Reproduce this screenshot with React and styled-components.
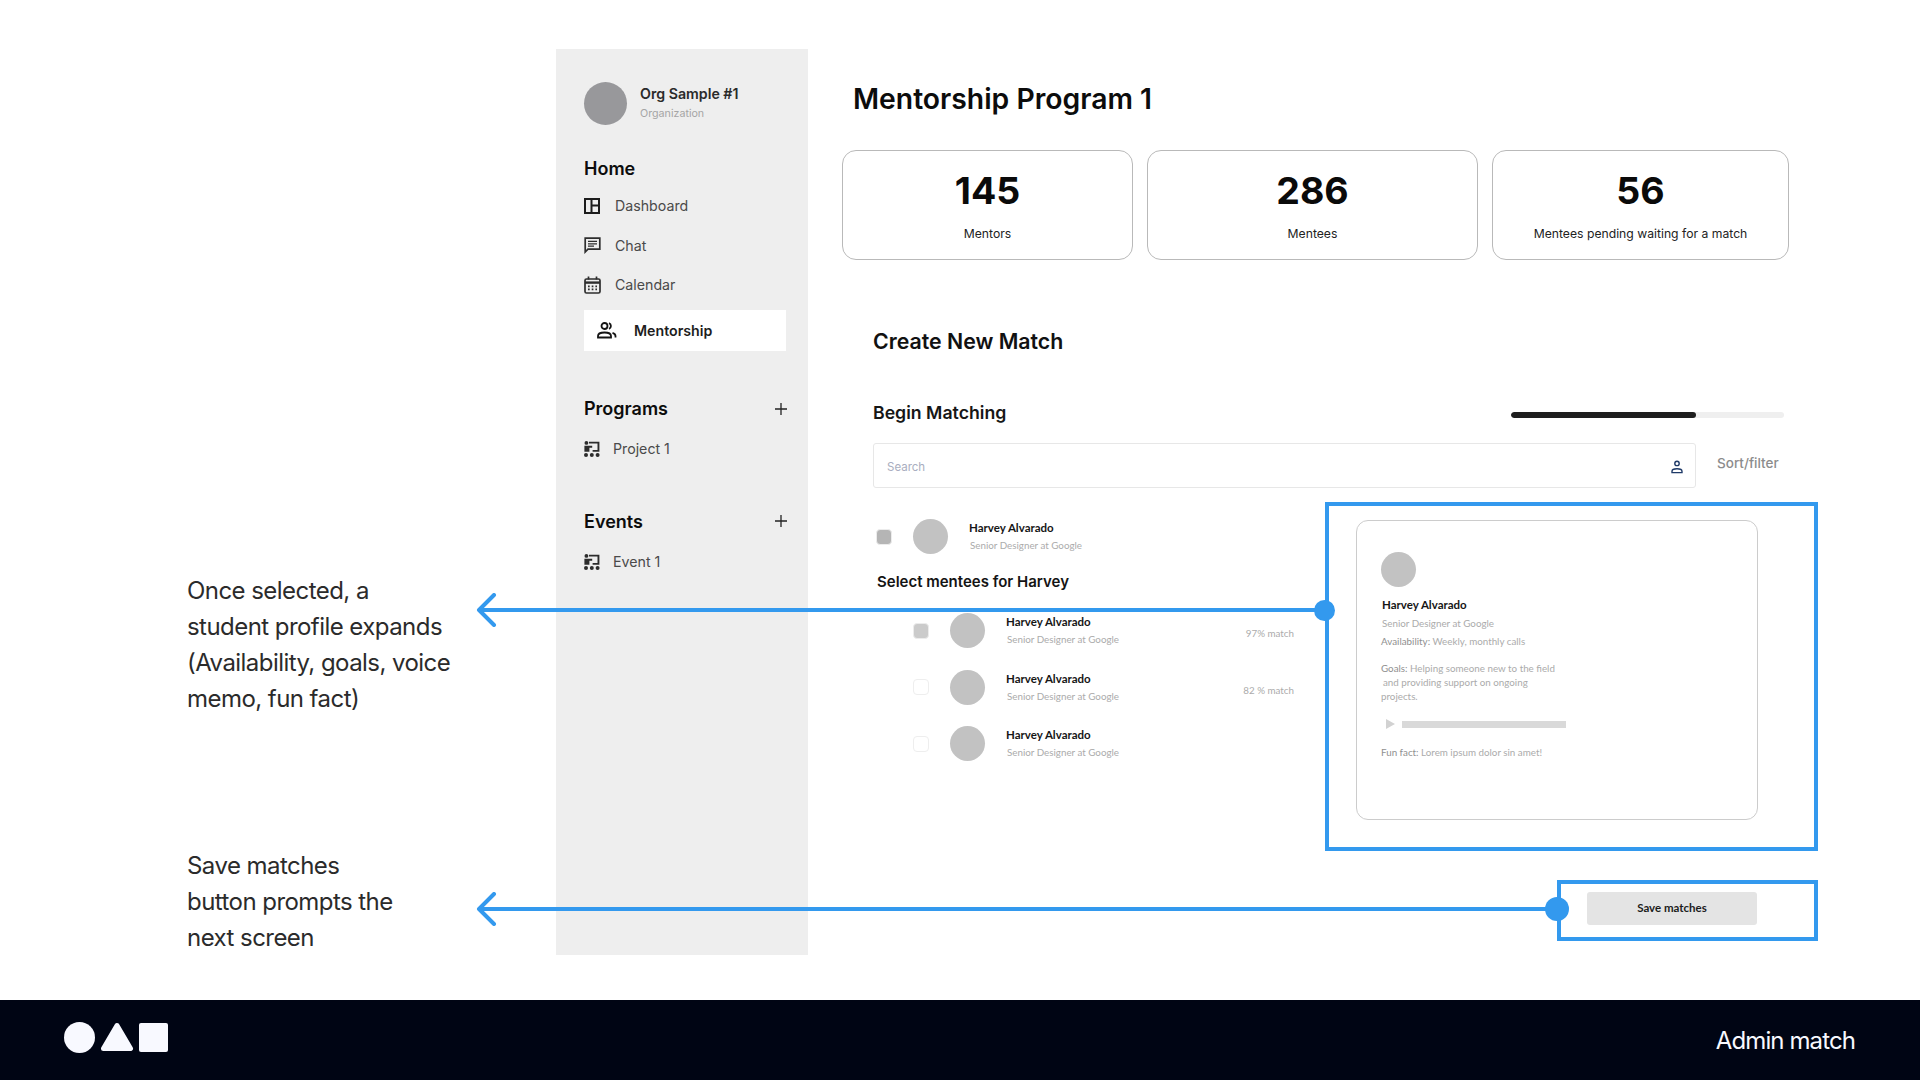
import React from 'react';
import styled, { createGlobalStyle } from 'styled-components';

const GlobalStyle = createGlobalStyle`
  html, body {
    margin: 0;
    padding: 0;
    background: #fff;
  }
  body {
    font-family: 'Inter', 'Liberation Sans', sans-serif;
    color: #111;
  }
  * {
    box-sizing: border-box;
  }
`;

const BLUE = '#3399ee';

const Page = styled.div`
  width: 1920px;
  height: 1080px;
  display: flex;
  flex-direction: column;
  overflow: hidden;
`;

const Main = styled.div`
  flex: 1;
  display: flex;
  padding-top: 49px;
`;

const Notes = styled.div`
  width: 556px;
  padding: 524px 0 0 187px;
  display: flex;
  flex-direction: column;
  gap: 131px;
`;

const Note = styled.p`
  margin: 0;
  font-size: 24px;
  line-height: 36px;
  letter-spacing: -0.55px;
  color: #2b2b2b;
  white-space: pre-line;
`;

const Sidebar = styled.aside`
  width: 252px;
  height: 906px;
  background: #eeeeee;
  padding: 33px 21px 0 28px;
`;

const OrgRow = styled.div`
  display: flex;
  align-items: center;
  gap: 13px;
  margin-bottom: 31px;
`;

const OrgAvatar = styled.div`
  width: 43px;
  height: 43px;
  border-radius: 50%;
  background: #98989b;
`;

const OrgName = styled.div`
  font-size: 14.2px;
  font-weight: 600;
  line-height: 18px;
  color: #2a2a2a;
`;

const OrgType = styled.div`
  font-size: 10.7px;
  line-height: 16px;
  margin-top: 3px;
  color: #a5a5a5;
`;

const SectionHead = styled.div`
  display: flex;
  align-items: center;
  justify-content: space-between;
  height: 24px;
  font-size: 18px;
  font-weight: 600;
  color: #0c0c0c;
  margin-top: ${p => p.$top || 0}px;
  margin-bottom: ${p => p.$bottom || 0}px;
`;

const NavItem = styled.div`
  display: flex;
  align-items: center;
  height: 39.5px;
  gap: ${p => p.$gap || 14}px;
  font-size: 14.2px;
  color: #4a4a4a;
`;

const ActiveItem = styled.div`
  display: flex;
  align-items: center;
  gap: 17px;
  width: 202px;
  height: 41px;
  margin-top: 5px;
  padding-left: 13px;
  background: #fff;
  font-size: 14.2px;
  font-weight: 600;
  color: #1d1d1d;
`;

const Content = styled.main`
  flex: 1;
  padding-left: 34px;
`;

const Title = styled.h1`
  margin: 33px 0 0 11px;
  font-size: 28.3px;
  line-height: 34px;
  font-weight: 600;
  color: #0c0c0c;
`;

const StatRow = styled.div`
  display: flex;
  gap: 14px;
  margin-top: 34px;
`;

const StatCard = styled.div`
  width: ${p => p.$width}px;
  height: 110px;
  border: 1px solid #b9b9b9;
  border-radius: 14px;
  text-align: center;
  padding-top: 17px;
`;

const StatValue = styled.div`
  font-size: 37.5px;
  line-height: 46px;
  font-weight: 700;
  color: #0a0a0a;
`;

const StatLabel = styled.div`
  margin-top: 12px;
  font-size: 12.2px;
  line-height: 16px;
  color: #222;
`;

const Form = styled.section`
  padding-left: 31px;
`;

const SubTitle = styled.h2`
  margin: 67px 0 0;
  font-size: 21.3px;
  line-height: 28px;
  font-weight: 600;
  color: #111;
`;

const MatchHead = styled.div`
  display: flex;
  align-items: center;
  justify-content: space-between;
  width: 911px;
  margin-top: 45px;
  height: 26px;
`;

const MatchTitle = styled.h3`
  margin: 0 0 2px;
  font-size: 17.7px;
  font-weight: 600;
  color: #161616;
`;

const Progress = styled.div`
  width: 273px;
  height: 6px;
  margin-top: 3px;
  border-radius: 3px;
  background: #efefef;
  overflow: hidden;
`;

const ProgressFill = styled.div`
  height: 100%;
  border-radius: 3px;
  background: #1e1e1e;
`;

const SearchRow = styled.div`
  display: flex;
  align-items: flex-start;
  gap: 21px;
  margin-top: 17px;
`;

const SearchBox = styled.div`
  width: 823px;
  height: 45px;
  display: flex;
  align-items: center;
  justify-content: space-between;
  padding: 2px 12px 0 13px;
  border: 1px solid #e7e7e7;
  border-radius: 3px;
  font-size: 11.5px;
  color: #a9aec0;
`;

const SortLabel = styled.div`
  margin-top: 11px;
  font-size: 13.5px;
  line-height: 18px;
  font-weight: 500;
  color: #8c8c8c;
`;

const MatchArea = styled.div`
  display: flex;
  margin-top: 14px;
`;

const PeopleList = styled.div`
  width: 452px;
  padding-top: 17px;
`;

const PersonRow = styled.div`
  display: flex;
  align-items: center;
  height: 35px;
  padding-left: ${p => (p.$nested ? 40 : 3)}px;
  padding-right: 31px;
  margin-bottom: ${p => p.$bottom || 0}px;
`;

const Check = styled.div`
  width: 16px;
  height: 16px;
  border-radius: 4px;
  border: 1px solid ${p => (p.$fill ? '#ececec' : '#eeeeee')};
  background: ${p => p.$fill || '#fff'};
  margin-right: 21px;
`;

const Avatar = styled.div`
  flex: none;
  width: 35px;
  height: 35px;
  border-radius: 50%;
  background: #c2c2c2;
`;

const PersonText = styled.div`
  margin-left: 21px;
  flex: 1;
`;

const PersonName = styled.div`
  font-family: 'Lato', 'Liberation Sans', sans-serif;
  font-size: 11.5px;
  line-height: 16px;
  font-weight: 700;
  color: #161616;
`;

const PersonRole = styled.div`
  font-family: 'Lato', 'Liberation Sans', sans-serif;
  font-size: 9.8px;
  line-height: 16px;
  margin: 1px 0 0 1px;
  color: #ababab;
`;

const MatchScore = styled.div`
  font-family: 'Lato', 'Liberation Sans', sans-serif;
  font-size: 9.8px;
  color: #ababab;
  margin-top: ${p => p.$top || 0}px;
`;

const SelectTitle = styled.div`
  margin: 0 0 21px 4px;
  font-size: 15px;
  line-height: 20px;
  font-weight: 600;
  color: #141414;
`;

const Frame = styled.div`
  position: relative;
  border: 4px solid ${BLUE};
`;

const ProfileFrame = styled(Frame)`
  width: 493px;
  height: 349px;
  padding: 14px 0 0 27px;
`;

const SaveFrame = styled(Frame)`
  width: 261px;
  height: 61px;
  padding: 8px 0 0 26px;
`;

const Dot = styled.span`
  position: absolute;
  left: ${p => p.$left}px;
  top: ${p => p.$top}px;
  width: ${p => p.$size}px;
  height: ${p => p.$size}px;
  border-radius: 50%;
  background: ${BLUE};
`;

const Connector = styled.div`
  position: absolute;
  right: 100%;
  top: ${p => p.$top}px;
  width: ${p => p.$width}px;
  height: 4px;
  background: ${BLUE};
`;

const ArrowHead = styled.svg`
  position: absolute;
  left: -2px;
  top: -15px;
`;

const ProfileCard = styled.div`
  width: 402px;
  height: 300px;
  border: 1px solid #cccccc;
  border-radius: 12px;
  padding: 31px 0 0 24px;
`;

const ProfileText = styled.div`
  font-family: 'Lato', 'Liberation Sans', sans-serif;
  font-size: 9.8px;
  line-height: 14px;
  color: #ababab;
  margin-top: ${p => p.$top || 0}px;
  margin-left: ${p => p.$left || 0}px;
  white-space: pre;
`;

const FieldLabel = styled.span`
  color: #8f8f8f;
`;

const ProfileName = styled(PersonName)`
  margin: 10px 0 0 1px;
`;

const Voice = styled.div`
  display: flex;
  align-items: center;
  gap: 7px;
  margin: 14px 0 0 5px;
  height: 14px;
`;

const PlayIcon = styled.span`
  width: 0;
  height: 0;
  border-left: 9px solid #d2d2d2;
  border-top: 5px solid transparent;
  border-bottom: 5px solid transparent;
`;

const VoiceBar = styled.div`
  width: 164px;
  height: 7px;
  background: #d9d9d9;
`;

const SaveRow = styled.div`
  display: flex;
  justify-content: flex-end;
  width: 945px;
  margin-top: 29px;
`;

const SaveButton = styled.button`
  width: 170px;
  height: 33px;
  padding: 0 0 2px;
  border: none;
  border-radius: 3px;
  background: #e4e4e4;
  font-family: 'Lato', 'Liberation Sans', sans-serif;
  font-size: 11.5px;
  font-weight: 700;
  color: #1c1c1c;
`;

const Footer = styled.footer`
  height: 80px;
  flex: none;
  background: #000514;
  display: flex;
  align-items: center;
  justify-content: space-between;
  padding: 0 65px 0 64px;
`;

const FooterTitle = styled.div`
  font-size: 24px;
  letter-spacing: -0.9px;
  color: #f8f9ff;
`;

const LogoSvg = styled.svg`
  margin-bottom: 5px;
`;

const DashboardIcon = () => (
  <svg width="16" height="16" viewBox="0 0 16 16" fill="none" stroke="#1c1c1c" strokeWidth="2">
    <rect x="1" y="1" width="14" height="14" />
    <path d="M7.5 1v14M7.5 7.5h7.5" />
  </svg>
);

const ChatIcon = () => (
  <svg width="17" height="17" viewBox="0 0 17 17" fill="none">
    <path d="M1.2 1.2h14.6v11H4L1.2 15z" stroke="#2e2e2e" strokeWidth="1.7" />
    <path d="M4 4.4h9M4 6.8h9M4 9.2h6" stroke="#2e2e2e" strokeWidth="1.3" />
  </svg>
);

const CalendarIcon = () => (
  <svg width="17" height="18" viewBox="0 0 17 18" fill="none" stroke="#2e2e2e">
    <rect x="1" y="3" width="15" height="14" rx="1.5" strokeWidth="1.7" />
    <path d="M1 6.6h15" strokeWidth="2.4" />
    <path d="M4.5 .4v3M12.5 .4v3" strokeWidth="1.7" />
    <path d="M4 10.4h9M4 13.4h9" strokeWidth="1.7" strokeDasharray="1.7 2" />
  </svg>
);

const PeopleIcon = () => (
  <svg width="20" height="17" viewBox="0 0 20 17" fill="none" stroke="#141414" strokeWidth="1.8">
    <circle cx="7.5" cy="4" r="3" />
    <path d="M1 15.5v-1.6c0-2 2.6-3.4 6.5-3.4s6.5 1.4 6.5 3.4v1.6z" />
    <path d="M12 1.2a3 3 0 0 1 0 5.6M15.5 10.8c1.8.6 3 1.6 3 3.2v1.6" />
  </svg>
);

const BoardIcon = () => (
  <svg width="16" height="16" viewBox="0 0 16 16" fill="#2c2c2c">
    <circle cx="2.4" cy="1.9" r="1.9" />
    <path d="M5 .8h10.4v10H8.6V9h4.9V2.6H5z" />
    <path d="M.4 4.8h7.8v2H5.4v4H.4z" />
    <circle cx="2" cy="14" r="2" />
    <circle cx="7.8" cy="14" r="2" />
    <circle cx="13.6" cy="14" r="2" />
  </svg>
);

const PlusIcon = () => (
  <svg width="12" height="12" viewBox="0 0 12 12" stroke="#222" strokeWidth="1.3">
    <path d="M6 0v12M0 6h12" />
  </svg>
);

const SearchPersonIcon = () => (
  <svg width="12" height="14" viewBox="0 0 12 14" fill="none" stroke="#1f3a68" strokeWidth="1.4">
    <circle cx="6" cy="3.4" r="2.2" />
    <path d="M1 12.6v-1.2c0-1.6 2.2-2.6 5-2.6s5 1 5 2.6v1.2z" />
  </svg>
);

const LogoMark = () => (
  <LogoSvg width="105" height="32" viewBox="0 0 105 32" fill="#f8f9ff">
    <circle cx="15.5" cy="15.5" r="15.5" />
    <path d="M53 3.5 L66.5 26.5 H39.5 Z" stroke="#f8f9ff" strokeWidth="5" strokeLinejoin="round" />
    <rect x="75" y="1" width="29" height="29" rx="2" />
  </LogoSvg>
);

const Arrow = () => (
  <ArrowHead width="24" height="34" viewBox="0 0 24 34" fill="none" stroke={BLUE} strokeWidth="4" strokeLinecap="round" strokeLinejoin="round">
    <path d="M18 2 L3 17 L18 32" />
  </ArrowHead>
);

const PersonInfo = () => (
  <PersonText>
    <PersonName>Harvey Alvarado</PersonName>
    <PersonRole>Senior Designer at Google</PersonRole>
  </PersonText>
);

const App = () => (
  <>
    <GlobalStyle />
    <Page>
      <Main>
        <Notes>
          <Note>{'Once selected, a\nstudent profile expands\n(Availability, goals, voice\nmemo, fun fact)'}</Note>
          <Note>{'Save matches\nbutton prompts the\nnext screen'}</Note>
        </Notes>

        <Sidebar>
          <OrgRow>
            <OrgAvatar />
            <div>
              <OrgName>Org Sample #1</OrgName>
              <OrgType>Organization</OrgType>
            </div>
          </OrgRow>

          <SectionHead $bottom={6}>Home</SectionHead>
          <NavItem $gap={15}><DashboardIcon />Dashboard</NavItem>
          <NavItem><ChatIcon />Chat</NavItem>
          <NavItem><CalendarIcon />Calendar</NavItem>
          <ActiveItem><PeopleIcon />Mentorship</ActiveItem>

          <SectionHead $top={46} $bottom={8.5}>Programs<PlusIcon /></SectionHead>
          <NavItem $gap={13}><BoardIcon />Project 1</NavItem>

          <SectionHead $top={40.5} $bottom={9}>Events<PlusIcon /></SectionHead>
          <NavItem $gap={13}><BoardIcon />Event 1</NavItem>
        </Sidebar>

        <Content>
          <Title>Mentorship Program 1</Title>

          <StatRow>
            <StatCard $width={291}>
              <StatValue>145</StatValue>
              <StatLabel>Mentors</StatLabel>
            </StatCard>
            <StatCard $width={331}>
              <StatValue>286</StatValue>
              <StatLabel>Mentees</StatLabel>
            </StatCard>
            <StatCard $width={297}>
              <StatValue>56</StatValue>
              <StatLabel>Mentees pending waiting for a match</StatLabel>
            </StatCard>
          </StatRow>

          <Form>
            <SubTitle>Create New Match</SubTitle>

            <MatchHead>
              <MatchTitle>Begin Matching</MatchTitle>
              <Progress>
                <ProgressFill style={{ width: `${(185 / 273) * 100}%` }} />
              </Progress>
            </MatchHead>

            <SearchRow>
              <SearchBox>
                Search
                <SearchPersonIcon />
              </SearchBox>
              <SortLabel>Sort/filter</SortLabel>
            </SearchRow>

            <MatchArea>
              <PeopleList>
                <PersonRow $bottom={18}>
                  <Check $fill="#b5b5b5" />
                  <Avatar />
                  <PersonInfo />
                </PersonRow>

                <SelectTitle>Select mentees for Harvey</SelectTitle>

                <PersonRow $nested $bottom={21.5}>
                  <Check $fill="#cbcbcb" />
                  <Avatar />
                  <PersonInfo />
                  <MatchScore $top={4}>97% match</MatchScore>
                </PersonRow>
                <PersonRow $nested $bottom={21.5}>
                  <Check />
                  <Avatar />
                  <PersonInfo />
                  <MatchScore $top={6}>82 % match</MatchScore>
                </PersonRow>
                <PersonRow $nested>
                  <Check />
                  <Avatar />
                  <PersonInfo />
                </PersonRow>
              </PeopleList>

              <ProfileFrame>
                <Connector $top={102} $width={851}><Arrow /></Connector>
                <Dot $left={-15} $top={93.5} $size={21} />
                <ProfileCard>
                  <Avatar />
                  <ProfileName>Harvey Alvarado</ProfileName>
                  <ProfileText $top={3} $left={1}>Senior Designer at Google</ProfileText>
                  <ProfileText $top={4}><FieldLabel>Availability:</FieldLabel> Weekly, monthly calls</ProfileText>
                  <ProfileText $top={13}><FieldLabel>Goals:</FieldLabel> Helping someone new to the field</ProfileText>
                  <ProfileText $left={2}>and providing support on ongoing</ProfileText>
                  <ProfileText>projects.</ProfileText>
                  <Voice>
                    <PlayIcon />
                    <VoiceBar />
                  </Voice>
                  <ProfileText $top={14}><FieldLabel>Fun fact:</FieldLabel> Lorem ipsum dolor sin amet!</ProfileText>
                </ProfileCard>
              </ProfileFrame>
            </MatchArea>

            <SaveRow>
              <SaveFrame>
                <Connector $top={23} $width={1083}><Arrow /></Connector>
                <Dot $left={-16} $top={13} $size={24} />
                <SaveButton>Save matches</SaveButton>
              </SaveFrame>
            </SaveRow>
          </Form>
        </Content>
      </Main>

      <Footer>
        <LogoMark />
        <FooterTitle>Admin match</FooterTitle>
      </Footer>
    </Page>
  </>
);

export default App;
